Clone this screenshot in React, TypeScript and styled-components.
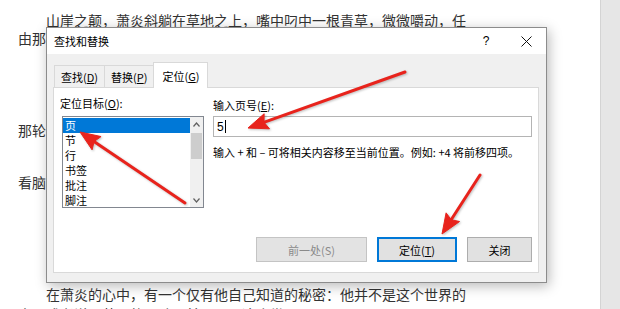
import React from "react";
import styled, { createGlobalStyle } from "styled-components";

const GlobalStyle = createGlobalStyle`
  html, body {
    margin: 0;
    padding: 0;
    background: #fff;
  }
  body {
    font-family: "Noto Sans CJK SC", "Noto Sans", sans-serif;
  }
`;

const Page = styled.div`
  position: relative;
  width: 620px;
  height: 309px;
  overflow: hidden;
  display: flex;
  background: #fff;
`;

const Doc = styled.div`
  flex: 1;
  padding: 11px 0 0 18px;
`;

const Para = styled.p<{ $space?: number; $lead?: number }>`
  margin: ${(p) => p.$space ?? 0}px 0 0;
  width: 450px;
  font-size: 14px;
  line-height: ${(p) => p.$lead ?? 18}px;
  color: #333;
  text-indent: 28px;
`;

const SideStrip = styled.div`
  width: 19px;
  background: #e6e6e6;
  border-left: 1px solid #d4d4d4;
`;

const Dialog = styled.div`
  position: absolute;
  left: 46px;
  top: 27px;
  width: 499px;
  height: 254px;
  border: 1px solid #8c8c8c;
  box-shadow: 2px 3px 12px rgba(0, 0, 0, 0.28);
  background: #f0f0f0;
  display: flex;
  flex-direction: column;
  font-family: "Noto Sans CJK SC", sans-serif;
  font-size: 11px;
  color: #000;
`;

const TitleBar = styled.div`
  height: 26px;
  display: flex;
  align-items: center;
  background: #fff;
  padding-left: 7px;

  .title {
    flex: 1;
  }
`;

const TitleButton = styled.div`
  width: 40px;
  height: 26px;
  display: flex;
  align-items: center;
  justify-content: center;
  font-size: 12px;
  font-family: "Liberation Sans", sans-serif;
`;

const Body = styled.div`
  flex: 1;
  display: flex;
  flex-direction: column;
  padding: 8px 7px 9px 6px;
`;

const TabRow = styled.div`
  display: flex;
  align-items: flex-end;
  height: 25px;
  padding-left: 2px;
  position: relative;
  z-index: 1;
`;

const Tab = styled.div<{ $active?: boolean }>`
  height: ${(p) => (p.$active ? 26 : 22)}px;
  margin-bottom: ${(p) => (p.$active ? -1 : 0)}px;
  margin-left: -1px;
  padding: 0 ${(p) => (p.$active ? 8 : 6)}px;
  display: flex;
  align-items: center;
  box-sizing: border-box;
  border: 1px solid #d9d9d9;
  border-bottom: none;
  background: ${(p) => (p.$active ? "#fff" : "#f0f0f0")};
`;

const Panel = styled.div`
  flex: 1;
  display: flex;
  flex-direction: column;
  background: #fff;
  border: 1px solid #d9d9d9;
  padding: 8px 5px 10px 6px;
`;

const Fields = styled.div`
  display: grid;
  grid-template-columns: 144px 319px;
  column-gap: 9px;
`;

const Column = styled.div`
  display: flex;
  flex-direction: column;
`;

const Label = styled.div<{ $offset?: number }>`
  line-height: 14px;
  margin-top: ${(p) => p.$offset ?? 0}px;
`;

const ListBox = styled.div`
  display: flex;
  width: 142px;
  height: 92px;
  box-sizing: border-box;
  margin: 6px 0 0 2px;
  border: 1px solid #828790;
  overflow: hidden;
  background: #fff;
`;

const Items = styled.div`
  flex: 1;
  padding-top: 1px;
`;

const Item = styled.div<{ $selected?: boolean }>`
  height: 15px;
  line-height: 15px;
  padding-left: 2px;
  background: ${(p) => (p.$selected ? "#0078d7" : "transparent")};
  color: ${(p) => (p.$selected ? "#fff" : "#000")};
`;

const ScrollBar = styled.div`
  width: 13px;
  display: flex;
  flex-direction: column;
  background: #f0f0f0;
`;

const ScrollArrow = styled.div`
  height: 14px;
  display: flex;
  align-items: center;
  justify-content: center;
`;

const Thumb = styled.div`
  height: 26px;
  margin: 2px 1px 0;
  background: #cdcdcd;
`;

const Track = styled.div`
  flex: 1;
`;

const Input = styled.div`
  height: 21px;
  box-sizing: border-box;
  margin-top: 4px;
  border: 1px solid #b4b4b4;
  padding-left: 3px;
  display: flex;
  align-items: center;
  font-size: 12px;
  font-family: "Liberation Sans", sans-serif;
`;

const Caret = styled.span`
  display: inline-block;
  width: 1px;
  height: 13px;
  margin-left: 1px;
  background: #000;
`;

const Hint = styled.div`
  margin-top: 8px;
  line-height: 14px;
  white-space: nowrap;
`;

const ButtonRow = styled.div`
  margin-top: auto;
  display: flex;
  justify-content: flex-end;
  gap: 9px;
  padding-right: 1px;
`;

const Button = styled.div<{ $width: number; $primary?: boolean; $disabled?: boolean }>`
  width: ${(p) => p.$width}px;
  height: 25px;
  box-sizing: border-box;
  display: flex;
  align-items: center;
  justify-content: center;
  background: ${(p) => (p.$disabled ? "#e3e3e3" : "#e1e1e1")};
  border: ${(p) => (p.$primary ? "2px solid #0078d7" : p.$disabled ? "1px solid #c4c4c4" : "1px solid #adadad")};
  color: ${(p) => (p.$disabled ? "#8a8a8a" : "#000")};
  margin-left: ${(p) => (p.$disabled ? 0 : 1)}px;
`;

const Overlay = styled.svg`
  position: absolute;
  left: 0;
  top: 0;
  width: 620px;
  height: 309px;
  pointer-events: none;
  filter: drop-shadow(1px 1px 1px rgba(0, 0, 0, 0.25));
`;

interface IArrow {
  from: [number, number];
  to: [number, number];
}

function Arrow({ from, to }: IArrow) {
  const [x1, y1] = from;
  const [x2, y2] = to;
  const len = Math.hypot(x2 - x1, y2 - y1);
  const ux = (x2 - x1) / len;
  const uy = (y2 - y1) / len;
  const hl = 20;
  const hw = 8;
  const bx = x2 - ux * hl;
  const by = y2 - uy * hl;
  const pts = [
    `${x2},${y2}`,
    `${bx - uy * hw},${by + ux * hw}`,
    `${bx + ux * 3},${by + uy * 3}`,
    `${bx + uy * hw},${by - ux * hw}`,
  ].join(" ");
  return (
    <g fill="#e8231c" stroke="#e8231c">
      <line x1={x1} y1={y1} x2={bx + ux * 4} y2={by + uy * 4} strokeWidth={3} strokeLinecap="round" />
      <polygon points={pts} strokeWidth={1} strokeLinejoin="round" />
    </g>
  );
}

const Chevron = ({ up }: { up?: boolean }) => (
  <svg width="7" height="5" viewBox="0 0 7 5">
    <path d={up ? "M0.5 4.5 L3.5 1 L6.5 4.5" : "M0.5 0.5 L3.5 4 L6.5 0.5"} fill="none" stroke="#606060" strokeWidth="1.2" />
  </svg>
);

const targets = ["页", "节", "行", "书签", "批注", "脚注"];

export default function App() {
  return (
    <Page>
      <GlobalStyle />
      <Doc>
        <Para>山崖之颠，萧炎斜躺在草地之上，嘴中叼中一根青草，微微嚼动，任由那淡淡的苦涩在嘴中弥漫开来……</Para>
        <Para $space={56}>举起白皙的手掌，挡在眼前，目光透过手指缝隙，遥望着蔚蓝天空上那轮炽热的太阳。</Para>
        <Para $space={16}>少年缓缓闭上双眼，任由微风拂过脸庞，思绪却早已飘远，静静地查看脑海中那些零散的记忆。</Para>
        <Para $space={93} $lead={20}>在萧炎的心中，有一个仅有他自己知道的秘密：他并不是这个世界的人，或者说，萧炎的灵魂，并不属于这个世界。</Para>
      </Doc>
      <SideStrip />

      <Dialog>
        <TitleBar>
          <span className="title">查找和替换</span>
          <TitleButton>?</TitleButton>
          <TitleButton>
            <svg width="11" height="11" viewBox="0 0 11 11">
              <path d="M0.5 0.5 L10.5 10.5 M10.5 0.5 L0.5 10.5" stroke="#111" strokeWidth="1" />
            </svg>
          </TitleButton>
        </TitleBar>
        <Body>
          <TabRow>
            <Tab>查找(<u>D</u>)</Tab>
            <Tab>替换(<u>P</u>)</Tab>
            <Tab $active>定位(<u>G</u>)</Tab>
          </TabRow>
          <Panel>
            <Fields>
              <Column>
                <Label>定位目标(<u>O</u>):</Label>
                <ListBox>
                  <Items>
                    {targets.map((t, i) => (
                      <Item key={t} $selected={i === 0}>{t}</Item>
                    ))}
                  </Items>
                  <ScrollBar>
                    <ScrollArrow><Chevron up /></ScrollArrow>
                    <Thumb />
                    <Track />
                    <ScrollArrow><Chevron /></ScrollArrow>
                  </ScrollBar>
                </ListBox>
              </Column>
              <Column>
                <Label $offset={2}>输入页号(<u>E</u>):</Label>
                <Input>5<Caret /></Input>
                <Hint>输入 + 和 – 可将相关内容移至当前位置。例如: +4 将前移四项。</Hint>
              </Column>
            </Fields>
            <ButtonRow>
              <Button $width={111} $disabled>前一处(S)</Button>
              <Button $width={80} $primary>定位(<u>T</u>)</Button>
              <Button $width={65}>关闭</Button>
            </ButtonRow>
          </Panel>
        </Body>
      </Dialog>

      <Overlay viewBox="0 0 620 309">
        <Arrow from={[405, 72]} to={[248, 128]} />
        <Arrow from={[185, 203]} to={[80, 132]} />
        <Arrow from={[480, 175]} to={[442, 234]} />
      </Overlay>
    </Page>
  );
}
